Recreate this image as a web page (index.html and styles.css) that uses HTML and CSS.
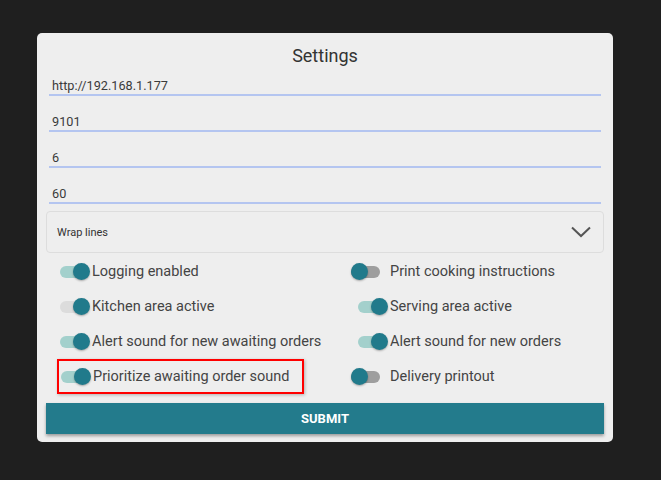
FILE: index.html
```html
<!DOCTYPE html>
<html lang="en">
<head>
  <meta charset="UTF-8">
  <title>Settings</title>
  <link rel="stylesheet" href="styles.css">
</head>
<body>
  <div class="card">
    <h2 class="title">Settings</h2>

    <input class="field" type="text" value="http://192.168.1.177">
    <input class="field" type="text" value="9101">
    <input class="field" type="text" value="6">
    <input class="field" type="text" value="60">

    <div class="select">
      <span>Wrap lines</span>
      <svg class="chevron" width="20" height="12" viewBox="0 0 20 12">
        <path d="M1 1.5 L10 10 L19 1.5" fill="none" stroke="#555" stroke-width="2"/>
      </svg>
    </div>

    <div class="options">
      <div class="cell left">
        <div class="row"><span class="switch on"></span><span class="label">Logging enabled</span></div>
      </div>
      <div class="cell right">
        <div class="row"><span class="slot"><span class="switch off"></span></span><span class="label">Print cooking instructions</span></div>
      </div>

      <div class="cell left">
        <div class="row"><span class="switch on grey"></span><span class="label">Kitchen area active</span></div>
      </div>
      <div class="cell right">
        <div class="row"><span class="slot"><span class="switch on"></span></span><span class="label">Serving area active</span></div>
      </div>

      <div class="cell left">
        <div class="row"><span class="switch on"></span><span class="label">Alert sound for new awaiting orders</span></div>
      </div>
      <div class="cell right">
        <div class="row"><span class="slot"><span class="switch on"></span></span><span class="label">Alert sound for new orders</span></div>
      </div>

      <div class="cell left">
        <div class="row highlight"><span class="switch on"></span><span class="label">Prioritize awaiting order sound</span></div>
      </div>
      <div class="cell right">
        <div class="row"><span class="slot"><span class="switch off"></span></span><span class="label">Delivery printout</span></div>
      </div>
    </div>

    <button class="submit">SUBMIT</button>
  </div>
</body>
</html>
```

FILE: styles.css
```css
body {
  margin: 0;
  background: #1f1f1f;
  font-family: Roboto, "Liberation Sans", sans-serif;
  padding: 33px 0 0 37px;
}

.card {
  width: 558px;
  background: #eeeeee;
  border-radius: 5px;
  padding: 12px 9px 8px;
  display: flex;
  flex-direction: column;
}

.title {
  margin: 0;
  font-size: 18px;
  font-weight: 400;
  line-height: 21px;
  text-align: center;
  color: #333;
}

.field {
  display: block;
  margin: 0 3px 6px;
  padding: 10px 2px 0 3px;
  height: 18px;
  border: none;
  border-bottom: 2px solid #b4c5f0;
  background: transparent;
  font-family: Roboto, "Liberation Sans", sans-serif;
  font-size: 12.7px;
  color: #3a3a3a;
  outline: none;
}

.select {
  margin-top: 1px;
  height: 40px;
  border: 1px solid #dddddd;
  border-radius: 4px;
  display: flex;
  align-items: center;
  justify-content: space-between;
  padding: 0 12px 0 10px;
  font-size: 11px;
  color: #333;
}

.options {
  margin-top: 1px;
  display: grid;
  grid-template-columns: 305px 1fr;
  grid-auto-rows: 35px;
}

.cell.left {
  padding-left: 14px;
}

.row {
  height: 35px;
  box-sizing: border-box;
  display: flex;
  align-items: center;
}

.row.highlight {
  width: fit-content;
  margin-left: -3px;
  padding: 0 12px 0 2px;
  border: 2px solid #ff0000;
  box-shadow: 1px 1px 3px rgba(0, 0, 0, 0.25);
}

.label {
  font-size: 14.5px;
  color: #444;
  margin-left: 3px;
}

.slot {
  width: 39px;
  display: flex;
}

.switch {
  position: relative;
  width: 29px;
  height: 12px;
  border-radius: 6px;
  flex: none;
}

.switch::after {
  content: "";
  position: absolute;
  top: -3px;
  width: 17px;
  height: 17px;
  border-radius: 50%;
  background: #217a8b;
  box-shadow: 0 1px 2px rgba(0, 0, 0, 0.3);
}

.switch.on {
  background: #a3d0cc;
}

.switch.on.grey {
  background: #dcdcdc;
}

.switch.on::after {
  right: -1px;
}

.switch.off {
  background: #9e9e9e;
}

.switch.off::after {
  left: 0;
}

.slot .switch.on {
  margin-left: 7px;
}

.right .label {
  margin-left: 0;
}

.submit {
  margin-top: 9px;
  height: 31px;
  border: none;
  background: #237b8c;
  color: #fff;
  font-family: Roboto, "Liberation Sans", sans-serif;
  font-size: 13px;
  font-weight: 700;
  box-shadow: 0 2px 3px rgba(0, 0, 0, 0.35);
}
```
